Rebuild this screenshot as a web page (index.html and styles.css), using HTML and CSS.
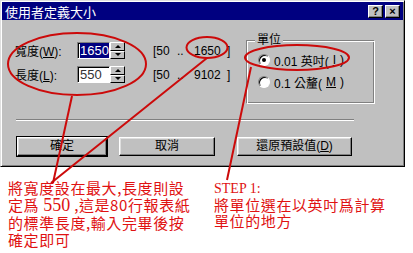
FILE: index.html
```html
<!DOCTYPE html>
<html lang="zh-Hant">
<head>
  <meta charset="UTF-8">
  <title>使用者定義大小</title>
  <link rel="stylesheet" href="styles.css">
</head>
<body>
  <div class="page">
    <div class="dialog">
      <div class="titlebar">
        <span class="title">使用者定義大小</span>
        <div class="tb-btns">
          <span class="tb-btn">?</span>
          <span class="tb-btn">×</span>
        </div>
      </div>

      <div class="top">
        <div class="fields">
          <div class="row">
            <label>寬度(<u>W</u>):</label>
            <div class="spin">
              <span class="field"><span class="sel">1650</span></span>
              <span class="arrows"><span class="arr up"></span><span class="arr dn"></span></span>
            </div>
            <span class="range"><span>[50</span><span>..</span><span>1650</span><span>]</span></span>
          </div>
          <div class="row">
            <label>長度(<u>L</u>):</label>
            <div class="spin">
              <span class="field"><span class="val">550</span></span>
              <span class="arrows"><span class="arr up"></span><span class="arr dn"></span></span>
            </div>
            <span class="range"><span>[50</span><span>..</span><span>9102</span><span>]</span></span>
          </div>
        </div>

        <div class="units">
          <span class="legend">單位</span>
          <div class="opt"><span class="radio on"></span>0.01 英吋(<u>I</u>)</div>
          <div class="opt"><span class="radio"></span>0.1 公釐(<u>M</u>)</div>
        </div>
      </div>

      <div class="sep"></div>

      <div class="buttons">
        <span class="btn default">確定</span>
        <span class="btn cancel">取消</span>
        <span class="btn reset">還原預設值(<u>D</u>)</span>
      </div>
    </div>

    <div class="notes">
      <p class="note-left">將寬度設在最大,長度則設<br>定爲 <span class="big">550</span> ,這是80行報表紙<br>的標準長度,輸入完畢後按<br>確定即可</p>
      <p class="note-right"><span class="step">STEP 1:</span><br>將單位選在以英吋爲計算<br>單位的地方</p>
    </div>

    <!-- red hand-drawn marks -->
    <svg class="marks" width="413" height="253" viewBox="0 0 413 253">
      <g fill="none" stroke="#cc0a0a" stroke-width="2">
        <ellipse cx="77" cy="64" rx="69" ry="31"/>
        <ellipse cx="207" cy="47.5" rx="20.5" ry="10.5"/>
        <ellipse cx="297" cy="57.5" rx="52" ry="12.5"/>
        <line x1="72" y1="96" x2="53" y2="183"/>
        <line x1="207" y1="58" x2="51" y2="183"/>
        <line x1="251" y1="67" x2="227" y2="180"/>
      </g>
    </svg>
  </div>
</body>
</html>
```

FILE: styles.css
```css
body {
  margin: 0;
  background: #fff;
  font-family: "Liberation Sans", "Noto Sans CJK TC", sans-serif;
}
.page {
  position: relative;
  width: 413px;
  height: 253px;
  overflow: hidden;
}
.dialog {
  width: 405px;
  height: 167px;
  box-sizing: border-box;
  padding: 1px;
  background: #c0c0c0;
  border: 1px solid;
  border-color: #dfdfdf #000 #000 #dfdfdf;
  box-shadow: inset 1px 1px #fff, inset -1px -1px #808080;
  font-size: 12px;
  color: #000;
}
.titlebar {
  height: 18px;
  background: #000080;
  color: #fff;
  display: flex;
  align-items: center;
  justify-content: space-between;
  padding: 0 3px 0 3px;
  font-size: 13px;
}
.tb-btns {
  display: flex;
  gap: 2px;
}
.tb-btn {
  width: 15px;
  height: 13px;
  box-sizing: border-box;
  background: #c0c0c0;
  color: #000;
  border: 1px solid;
  border-color: #fff #000 #000 #fff;
  box-shadow: inset -1px -1px #808080;
  font: bold 11px/11px "Liberation Sans", sans-serif;
  text-align: center;
}
.top {
  display: flex;
}
.fields {
  width: 244px;
  box-sizing: border-box;
  padding: 22px 0 0 13px;
}
.row {
  display: flex;
  align-items: center;
  height: 17px;
}
.row + .row {
  margin-top: 7px;
}
.row label {
  width: 62px;
}
.spin {
  display: flex;
  width: 48px;
  height: 17px;
}
.field {
  width: 33px;
  box-sizing: border-box;
  background: #fff;
  border: 1px solid;
  border-color: #808080 #fff #fff #808080;
  box-shadow: inset 1px 1px #000;
  padding: 1px 0 0 2px;
  font-size: 13px;
  line-height: 14px;
}
.sel {
  background: #000080;
  color: #fff;
}
.val {
  color: #333;
}
.arrows {
  width: 15px;
  display: flex;
  flex-direction: column;
}
.arr {
  flex: 1;
  box-sizing: border-box;
  background: #c0c0c0;
  border: 1px solid;
  border-color: #fff #000 #000 #fff;
  display: flex;
  align-items: center;
  justify-content: center;
}
.arr::after {
  content: "";
  border-left: 3px solid transparent;
  border-right: 3px solid transparent;
}
.up::after {
  border-bottom: 3px solid #000;
}
.dn::after {
  border-top: 3px solid #000;
}
.range {
  margin-left: 28px;
  display: grid;
  grid-template-columns: 24px 17px 33px auto;
}
.units {
  width: 129px;
  height: 64px;
  box-sizing: border-box;
  margin-top: 20px;
  border: 1px solid;
  border-color: #808080 #fff #fff #808080;
  box-shadow: inset 1px 1px #fff, inset -1px -1px #808080;
  padding: 0 0 0 11px;
}
.legend {
  display: block;
  width: fit-content;
  height: 16px;
  margin: -9px 0 0 -3px;
  padding: 0 2px;
  background: #c0c0c0;
  line-height: 16px;
}
.opt {
  display: flex;
  align-items: center;
  gap: 4px;
  height: 14px;
}
.legend + .opt {
  margin-top: 5px;
}
.opt + .opt {
  margin-top: 8px;
}
.radio {
  position: relative;
  width: 12px;
  height: 12px;
  box-sizing: border-box;
  border-radius: 50%;
  background: #fff;
  border: 1px solid;
  border-color: #808080 #fff #fff #808080;
  box-shadow: inset 1px 1px #000;
}
.radio.on::after {
  content: "";
  position: absolute;
  left: 3px;
  top: 3px;
  width: 4px;
  height: 4px;
  border-radius: 50%;
  background: #000;
}
.sep {
  width: 338px;
  height: 1px;
  margin: 15px 0 0 14px;
  background: #808080;
  border-bottom: 1px solid #fff;
}
.buttons {
  display: flex;
  margin: 16px 0 0 15px;
}
.btn {
  height: 19px;
  box-sizing: border-box;
  background: #c0c0c0;
  border: 1px solid;
  border-color: #fff #000 #000 #fff;
  box-shadow: inset -1px -1px #808080, inset 1px 1px #dfdfdf;
  text-align: center;
  line-height: 17px;
}
.btn.default {
  width: 90px;
  outline: 1px solid #000;
}
.btn.cancel {
  width: 96px;
  margin-left: 12px;
}
.btn.reset {
  width: 115px;
  margin-left: 22px;
}
.notes {
  display: flex;
  padding: 12px 0 0 8px;
  color: #e01212;
  font-family: "Noto Sans CJK TC", sans-serif;
  font-size: 15px;
  letter-spacing: 0.6px;
  white-space: nowrap;
}
.notes p {
  margin: 0;
}
.note-left {
  width: 206px;
  line-height: 17px;
}
.note-right {
  line-height: 16px;
}
.big {
  font-family: "Liberation Serif", serif;
  font-size: 18px;
  letter-spacing: 0;
}
.step {
  font-family: "Liberation Serif", serif;
  font-size: 14px;
  letter-spacing: 0;
}
.marks {
  position: absolute;
  left: 0;
  top: 0;
}
```
